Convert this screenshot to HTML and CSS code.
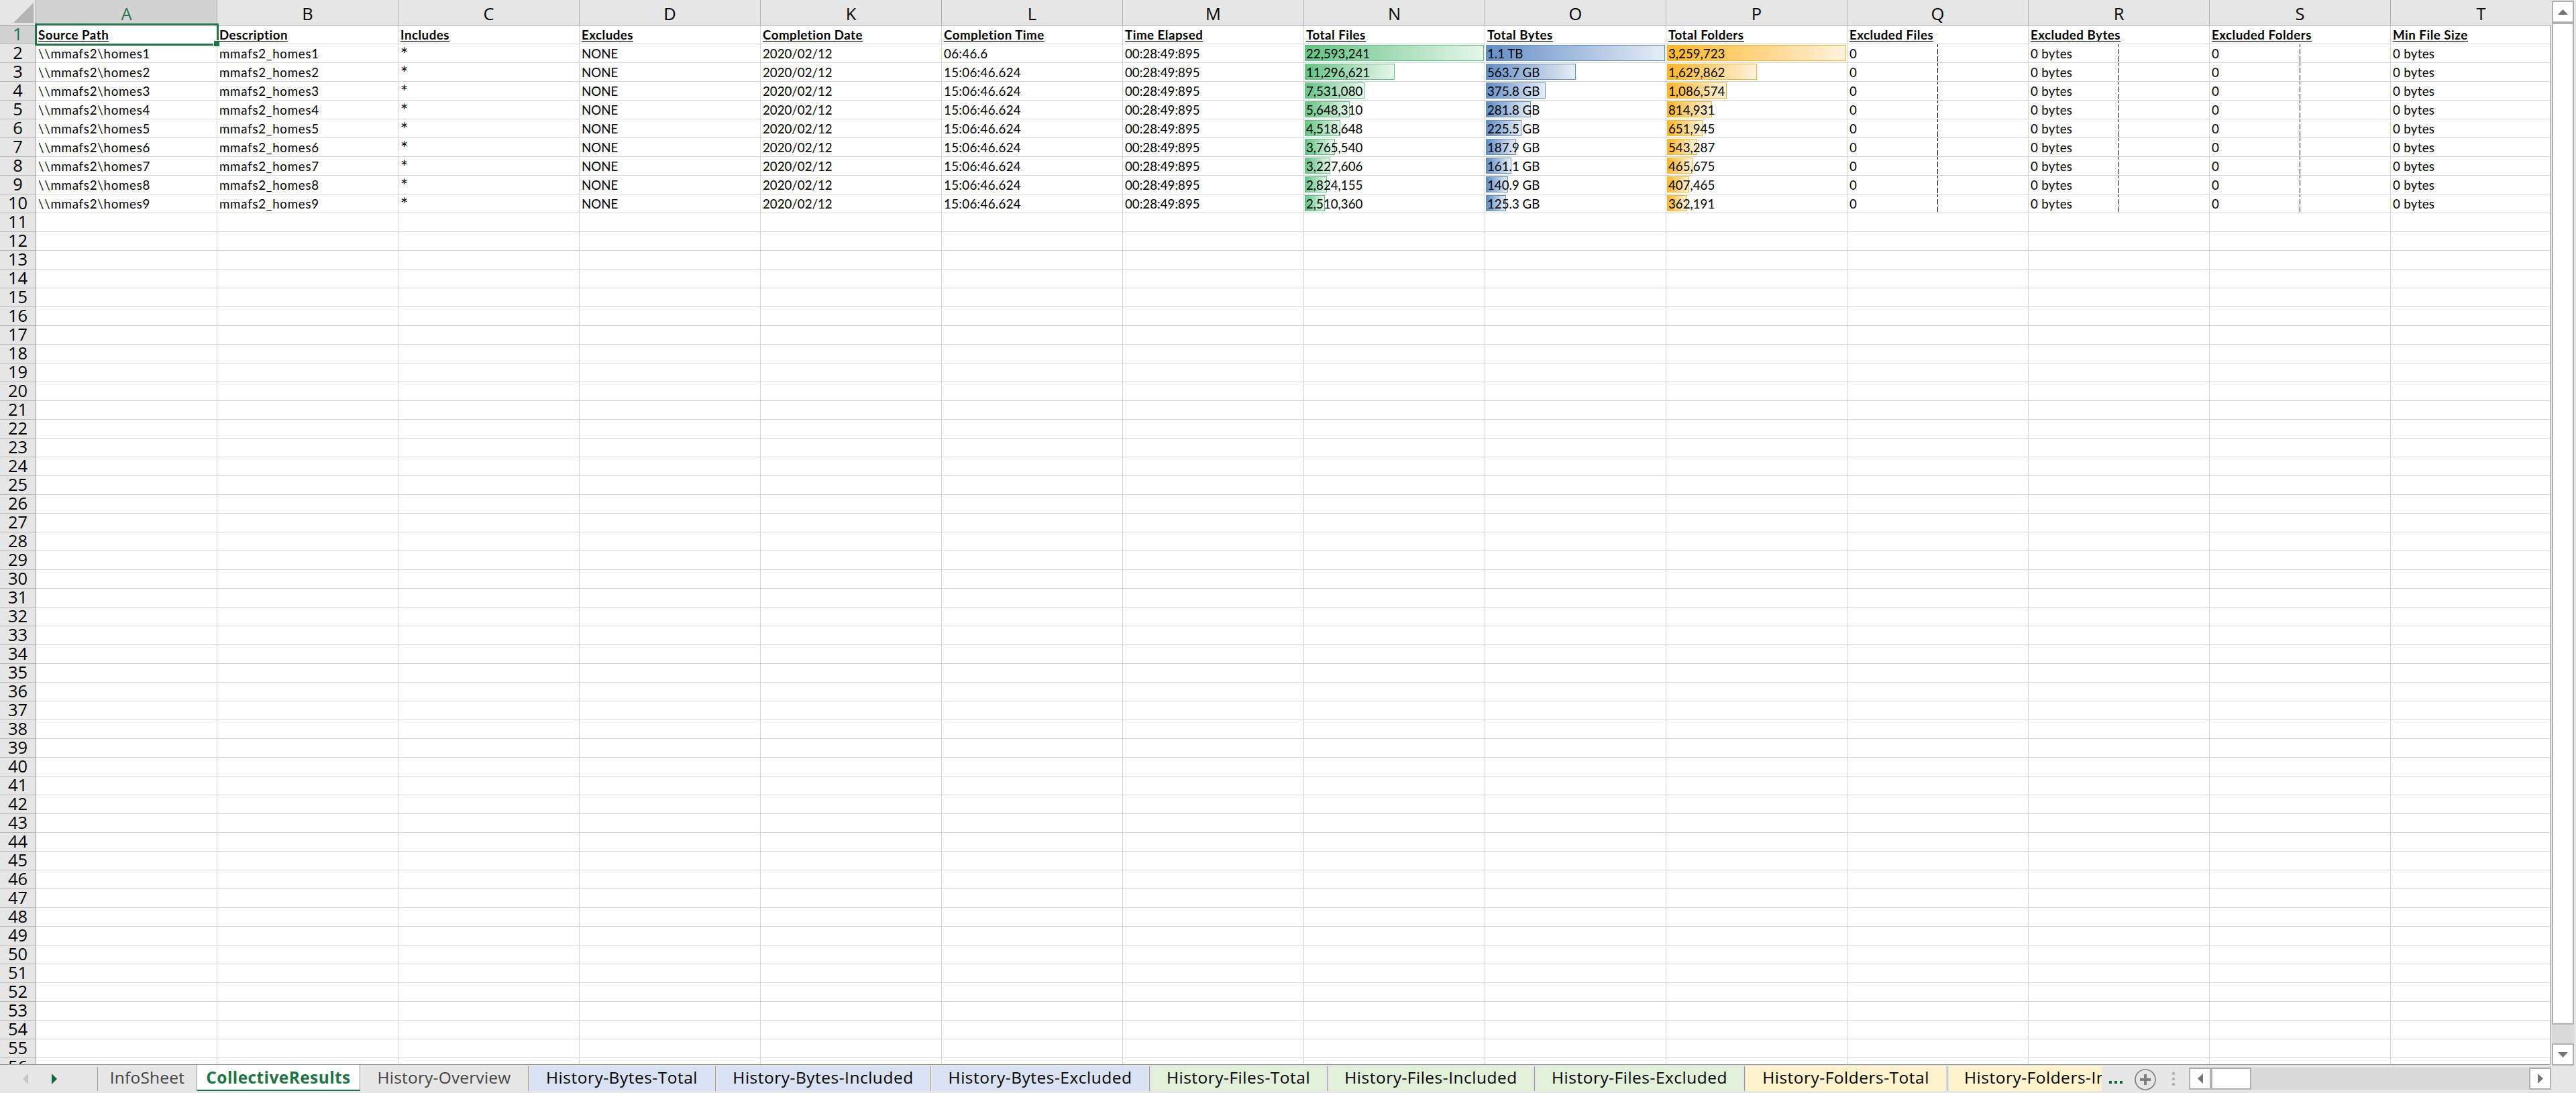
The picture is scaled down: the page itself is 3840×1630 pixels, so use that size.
FILE: index.html
```html
<!DOCTYPE html>
<html lang="en">
<head>
    <meta charset="UTF-8">
    <meta name="viewport" content="width=device-width, initial-scale=1.0">
    <title>CollectiveResults</title>
    <link rel="stylesheet" href="styles.css">
</head>

<body>

    <div class="main">
        <div class="sheet" id="sheet"></div>

        <div class="v-scroll">
            <div class="scroll-btn"><svg width="15" height="8"><path d="M0 8L7.5 0L15 8Z" /></svg></div>
            <div class="v-thumb"></div>
            <div class="track"></div>
            <div class="scroll-btn"><svg width="15" height="8"><path d="M0 0L7.5 8L15 0Z" /></svg></div>
        </div>
    </div>

    <div class="tab-bar">
        <div class="tab-nav">
            <svg class="prev" width="8" height="16"><path d="M8 0L0 8L8 16Z" /></svg>
            <svg class="next" width="8" height="16"><path d="M0 0L8 8L0 16Z" /></svg>
        </div>
        <div class="tabs">
            <div class="tab info"><span>InfoSheet</span></div>
            <div class="tab active"><span>CollectiveResults</span></div>
            <div class="tab overview"><span>History-Overview</span></div>
            <div class="tab blue"><span>History-Bytes-Total</span></div>
            <div class="tab blue"><span>History-Bytes-Included</span></div>
            <div class="tab blue"><span>History-Bytes-Excluded</span></div>
            <div class="tab green"><span>History-Files-Total</span></div>
            <div class="tab green"><span>History-Files-Included</span></div>
            <div class="tab green"><span>History-Files-Excluded</span></div>
            <div class="tab orange"><span>History-Folders-Total</span></div>
            <div class="tab orange cut"><span>History-Folders-Included</span></div>
        </div>
        <svg class="more" width="20" height="4">
            <rect width="4" height="4" /><rect x="8" width="4" height="4" /><rect x="16" width="4" height="4" />
        </svg>
        <svg class="add" width="32" height="32">
            <circle cx="16" cy="16" r="15" />
            <path d="M16 8V24M8 16H24" />
        </svg>
        <svg class="grip" width="4" height="20">
            <rect width="4" height="4" /><rect y="8" width="4" height="4" /><rect y="16" width="4" height="4" />
        </svg>
        <div class="h-scroll">
            <div class="scroll-btn"><svg width="8" height="15"><path d="M8 0L0 7.5L8 15Z" /></svg></div>
            <div class="h-thumb"></div>
            <div class="track"></div>
            <div class="scroll-btn"><svg width="8" height="15"><path d="M0 0L8 7.5L0 15Z" /></svg></div>
        </div>
    </div>

    <script src="script.js"></script>
</body>
</html>
```
FILE: styles.css
```css
:root {
    --chrome: #e6e6e6;
    --line: #d4d4d4;
    --edge: #9b9b9b;
    --scroll-border: #b0b0b0;
    --excel-green: #217346;
}

* {
    box-sizing: border-box;
}

body {
    margin: 0;
    width: 3840px;
    height: 1630px;
    overflow: hidden;
    background: var(--chrome);
    color: #000;
    font-family: Lato, sans-serif;
}

svg {
    display: block;
}

.main {
    display: flex;
    height: 1588px;
}

/* grid of cells */
.sheet {
    position: relative;
    width: 3802px;
    height: 1588px;
    overflow: hidden;
    border-bottom: 1px solid var(--edge);
}

.sheet::after {
    content: "";
    position: absolute;
    top: 37px;
    right: 0;
    bottom: 0;
    width: 1px;
    background: var(--edge);
}

.row {
    display: grid;
    grid-template-columns: 54px repeat(14, 270px);
    grid-template-rows: 100%;
    width: 3834px;
    height: 28px;
}

.row.letters {
    height: 38px;
}

.corner {
    border-right: 1px solid var(--edge);
    border-bottom: 1px solid var(--edge);
    padding: 4px 0 0 20px;
}

.corner path {
    fill: #b4b4b4;
}

.letter,
.number {
    font-family: "Open Sans", sans-serif;
    font-size: 25.5px;
    text-align: center;
}

.letter {
    line-height: 41px;
    border-right: 1px solid #b0b0b0;
    border-bottom: 1px solid var(--edge);
}

.number {
    line-height: 25px;
    letter-spacing: -0.2px;
    background: var(--chrome);
    border-right: 1px solid var(--edge);
    border-bottom: 1px solid #b8b8b8;
}

.letter.on,
.number.on {
    background: #d2d2d2;
    color: var(--excel-green);
}

.cell {
    position: relative;
    padding-left: 3px;
    font-size: 18.7px;
    line-height: 29px;
    white-space: pre;
    background: #fff;
    border-right: 1px solid var(--line);
    border-bottom: 1px solid var(--line);
}

.cell span {
    position: relative;
}

.cell.path {
    letter-spacing: 0.75px;
}

.cell.time,
.cell.size {
    letter-spacing: 0.3px;
}

.cell.star {
    font-size: 26px;
    line-height: 31px;
}

.cell.head {
    letter-spacing: 0.5px;
}

.head span {
    display: inline-block;
    height: 24px;
    font-weight: bold;
    border-bottom: 1px solid #000;
}

/* data bars sit behind the numbers */
.bar {
    position: absolute;
    top: 1px;
    left: 1px;
    height: 24px;
    border: 1px solid;
}

.bar.files {
    border-color: #63c384;
    background: linear-gradient(to right, #63c384, #e6f6eb);
}

.bar.bytes {
    border-color: #638ec6;
    background: linear-gradient(to right, #638ec6, #e6edf6);
}

.bar.folders {
    border-color: #ffb628;
    background: linear-gradient(to right, #ffb628, #fff2dc);
}

.axis {
    position: absolute;
    top: 0;
    left: 134px;
    width: 1px;
    height: 28px;
    background: linear-gradient(to bottom, #000 8px, transparent 8px);
    background-size: 1px 11px;
    background-position: 0 -4px;
}

.selection {
    position: absolute;
    top: 35px;
    left: 52px;
    width: 274px;
    height: 33px;
    border: 3px solid var(--excel-green);
}

.handle {
    position: absolute;
    top: 60px;
    left: 318px;
    width: 9px;
    height: 9px;
    border: solid #fff;
    border-width: 1px 0 0 1px;
    background: var(--excel-green);
}

/* scrollbars */
.v-scroll {
    display: flex;
    flex-direction: column;
    width: 33px;
    height: 1588px;
    margin: 1px 0 0 2px;
}

.h-scroll {
    display: flex;
    width: 540px;
    height: 33px;
    margin: 4px 0 0 21px;
}

.scroll-btn {
    display: flex;
    flex: none;
    align-items: center;
    justify-content: center;
    width: 33px;
    height: 33px;
    background: #fff;
    border: 2px solid var(--scroll-border);
}

.scroll-btn path {
    fill: #737373;
}

.v-thumb {
    height: 1494px;
    background: #fff;
    border: 2px solid var(--scroll-border);
}

.h-thumb {
    width: 60px;
    background: #fff;
    border: 2px solid var(--scroll-border);
}

.track {
    flex: 1;
    background: #dadada;
}

/* sheet tabs */
.tab-bar {
    display: flex;
    height: 42px;
}

.tab-nav {
    display: flex;
    gap: 35px;
    width: 146px;
    height: 36px;
    margin-top: 3px;
    padding: 10px 0 0 34px;
    border-right: 1px solid var(--edge);
}

.prev path {
    fill: #c6c6c6;
}

.next path {
    fill: #0e6839;
}

.tabs {
    display: grid;
    grid-template-columns: 147px 244px 251px 279px 321px 326px 265px 309px 313px 302px 230px;
    height: 42px;
}

.tab {
    height: 37px;
    margin-top: 2px;
    border-right: 1px solid var(--edge);
    font-family: "Open Sans", sans-serif;
    font-size: 24.5px;
    line-height: 34px;
    letter-spacing: 0.5px;
    text-align: center;
    white-space: nowrap;
    color: #000;
}

.tab.info,
.tab.overview {
    color: #444;
    letter-spacing: 0.2px;
}

.tab.info {
    border-right: none;
}

.tab.active {
    height: 40px;
    margin-top: -1px;
    line-height: 40px;
    font-weight: bold;
    letter-spacing: 0.4px;
    color: var(--excel-green);
    background: #fff;
    border-left: 1px solid var(--edge);
    border-bottom: 2px solid var(--excel-green);
}

.tab.blue,
.tab.green,
.tab.orange {
    background-clip: content-box;
    padding: 0 2px;
}

.tab.blue {
    background-color: #d9e1f2;
}

.tab.green {
    background-color: #e2efda;
}

.tab.orange {
    background-color: #fff2cc;
}

.tab.cut {
    padding-right: 0;
    border-right: none;
    text-align: left;
    overflow: hidden;
}

.tab.cut span {
    padding-left: 23px;
}

.more {
    margin: 24px 0 0 11px;
    fill: #0e6839;
}

.add {
    margin: 6px 0 0 18px;
    fill: none;
    stroke: #808080;
    stroke-width: 1.7;
}

.add path {
    stroke-width: 4;
}

.grip {
    margin: 11px 0 0 24px;
    fill: #b0b0b0;
}
```
FILE: script.js
```js
const letters = ["A", "B", "C", "D", "K", "L", "M", "N", "O", "P", "Q", "R", "S", "T"];
const headings = ["Source Path", "Description", "Includes", "Excludes", "Completion Date", "Completion Time",
    "Time Elapsed", "Total Files", "Total Bytes", "Total Folders", "Excluded Files", "Excluded Bytes",
    "Excluded Folders", "Min File Size"];

const totals = [
    ["22,593,241", "1.1 TB", "3,259,723"],
    ["11,296,621", "563.7 GB", "1,629,862"],
    ["7,531,080", "375.8 GB", "1,086,574"],
    ["5,648,310", "281.8 GB", "814,931"],
    ["4,518,648", "225.5 GB", "651,945"],
    ["3,765,540", "187.9 GB", "543,287"],
    ["3,227,606", "161.1 GB", "465,675"],
    ["2,824,155", "140.9 GB", "407,465"],
    ["2,510,360", "125.3 GB", "362,191"]
];

const columnTypes = ["path", "path", "star", "", "", "time", "", "", "", "", "", "size", "", "size"];
const barTypes = { 7: "files", 8: "bytes", 9: "folders" };
const maxBar = 267;

function cellsFor(n) {
    if (n === 1) return headings;
    if (n > 10) return [];
    const i = n - 1;
    return ["\\\\mmafs2\\homes" + i, "mmafs2_homes" + i, "*", "NONE", "2020/02/12",
        i === 1 ? "06:46.6" : "15:06:46.624", "00:28:49:895",
        ...totals[i - 1], "0", "0 bytes", "0", "0 bytes"];
}

let html = '<div class="row letters"><div class="corner"><svg width="30" height="30"><path d="M30 0V30H0Z"/></svg></div>';
letters.forEach((l, i) => {
    html += `<div class="letter${i === 0 ? " on" : ""}">${l}</div>`;
});
html += "</div>";

for (let n = 1; n <= 56; n++) {
    const cells = cellsFor(n);
    html += `<div class="row"><div class="number${n === 1 ? " on" : ""}">${n}</div>`;
    for (let c = 0; c < letters.length; c++) {
        let extra = "";
        if (n > 1 && n <= 10) {
            if (barTypes[c]) {
                const width = Math.round(maxBar / (n - 1));
                extra = `<div class="bar ${barTypes[c]}" style="width: ${width}px"></div>`;
            } else if (c >= 10 && c <= 12) {
                extra = '<div class="axis"></div>';
            }
        }
        const text = cells[c] ? `<span>${cells[c]}</span>` : "";
        html += `<div class="cell ${n === 1 ? "head" : columnTypes[c]}">${extra}${text}</div>`;
    }
    html += "</div>";
}

html += '<div class="selection"></div><div class="handle"></div>';
document.getElementById("sheet").innerHTML = html;
```
